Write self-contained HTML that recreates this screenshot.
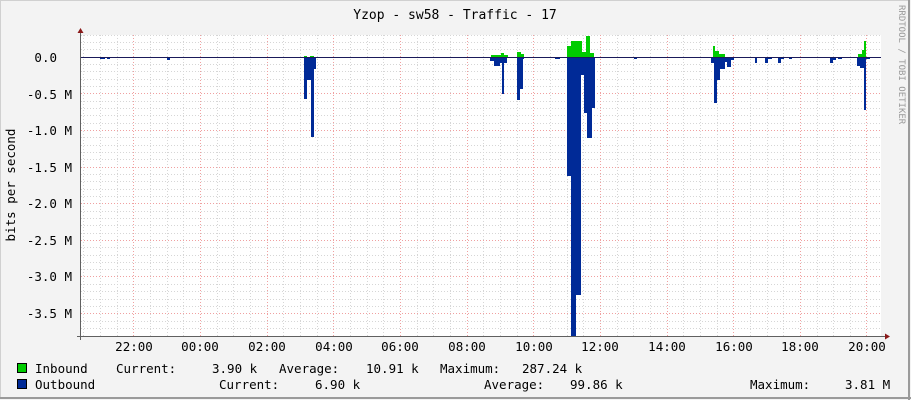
<!DOCTYPE html>
<html><head><meta charset="utf-8"><style>
html,body{margin:0;padding:0;background:#f3f3f3}
svg{display:block}
text{font-family:"DejaVu Sans Mono","Liberation Mono",monospace;fill:#000}
</style></head><body>
<svg width="911" height="400" viewBox="0 0 911 400" xmlns="http://www.w3.org/2000/svg">
<rect x="0" y="0" width="911" height="400" fill="#f3f3f3"/>
<rect x="0.5" y="0.5" width="908" height="397" fill="none" stroke="#d0d0d0"/>
<line x1="909" y1="0" x2="909" y2="400" stroke="#9a9a9a" stroke-width="2"/>
<line x1="0" y1="398" x2="911" y2="398" stroke="#9a9a9a" stroke-width="2"/>
<rect x="81" y="35" width="800" height="301" fill="#fff"/>
<g id="grid" stroke-width="1" stroke-dasharray="1,2" shape-rendering="crispEdges">
<g stroke="#d6d6d6">
<line x1="83.5" y1="35" x2="83.5" y2="336"/><line x1="100.5" y1="35" x2="100.5" y2="336"/><line x1="117.5" y1="35" x2="117.5" y2="336"/>
<line x1="150.5" y1="35" x2="150.5" y2="336"/><line x1="167.5" y1="35" x2="167.5" y2="336"/><line x1="183.5" y1="35" x2="183.5" y2="336"/>
<line x1="217.5" y1="35" x2="217.5" y2="336"/><line x1="233.5" y1="35" x2="233.5" y2="336"/><line x1="250.5" y1="35" x2="250.5" y2="336"/>
<line x1="283.5" y1="35" x2="283.5" y2="336"/><line x1="300.5" y1="35" x2="300.5" y2="336"/><line x1="317.5" y1="35" x2="317.5" y2="336"/>
<line x1="350.5" y1="35" x2="350.5" y2="336"/><line x1="367.5" y1="35" x2="367.5" y2="336"/><line x1="383.5" y1="35" x2="383.5" y2="336"/>
<line x1="417.5" y1="35" x2="417.5" y2="336"/><line x1="433.5" y1="35" x2="433.5" y2="336"/><line x1="450.5" y1="35" x2="450.5" y2="336"/>
<line x1="483.5" y1="35" x2="483.5" y2="336"/><line x1="500.5" y1="35" x2="500.5" y2="336"/><line x1="517.5" y1="35" x2="517.5" y2="336"/>
<line x1="550.5" y1="35" x2="550.5" y2="336"/><line x1="567.5" y1="35" x2="567.5" y2="336"/><line x1="583.5" y1="35" x2="583.5" y2="336"/>
<line x1="617.5" y1="35" x2="617.5" y2="336"/><line x1="633.5" y1="35" x2="633.5" y2="336"/><line x1="650.5" y1="35" x2="650.5" y2="336"/>
<line x1="683.5" y1="35" x2="683.5" y2="336"/><line x1="700.5" y1="35" x2="700.5" y2="336"/><line x1="717.5" y1="35" x2="717.5" y2="336"/>
<line x1="750.5" y1="35" x2="750.5" y2="336"/><line x1="767.5" y1="35" x2="767.5" y2="336"/><line x1="783.5" y1="35" x2="783.5" y2="336"/>
<line x1="817.5" y1="35" x2="817.5" y2="336"/><line x1="833.5" y1="35" x2="833.5" y2="336"/><line x1="850.5" y1="35" x2="850.5" y2="336"/>
<line x1="81" y1="35.5" x2="881" y2="35.5"/><line x1="81" y1="42.5" x2="881" y2="42.5"/><line x1="81" y1="49.5" x2="881" y2="49.5"/>
<line x1="81" y1="64.5" x2="881" y2="64.5"/><line x1="81" y1="71.5" x2="881" y2="71.5"/><line x1="81" y1="79.5" x2="881" y2="79.5"/><line x1="81" y1="86.5" x2="881" y2="86.5"/>
<line x1="81" y1="101.5" x2="881" y2="101.5"/><line x1="81" y1="108.5" x2="881" y2="108.5"/><line x1="81" y1="115.5" x2="881" y2="115.5"/><line x1="81" y1="123.5" x2="881" y2="123.5"/>
<line x1="81" y1="137.5" x2="881" y2="137.5"/><line x1="81" y1="145.5" x2="881" y2="145.5"/><line x1="81" y1="152.5" x2="881" y2="152.5"/><line x1="81" y1="159.5" x2="881" y2="159.5"/>
<line x1="81" y1="174.5" x2="881" y2="174.5"/><line x1="81" y1="181.5" x2="881" y2="181.5"/><line x1="81" y1="189.5" x2="881" y2="189.5"/><line x1="81" y1="196.5" x2="881" y2="196.5"/>
<line x1="81" y1="211.5" x2="881" y2="211.5"/><line x1="81" y1="218.5" x2="881" y2="218.5"/><line x1="81" y1="225.5" x2="881" y2="225.5"/><line x1="81" y1="233.5" x2="881" y2="233.5"/>
<line x1="81" y1="247.5" x2="881" y2="247.5"/><line x1="81" y1="255.5" x2="881" y2="255.5"/><line x1="81" y1="262.5" x2="881" y2="262.5"/><line x1="81" y1="269.5" x2="881" y2="269.5"/>
<line x1="81" y1="284.5" x2="881" y2="284.5"/><line x1="81" y1="291.5" x2="881" y2="291.5"/><line x1="81" y1="299.5" x2="881" y2="299.5"/><line x1="81" y1="306.5" x2="881" y2="306.5"/>
<line x1="81" y1="321.5" x2="881" y2="321.5"/><line x1="81" y1="328.5" x2="881" y2="328.5"/>
</g>
<g stroke="#f0a0a0">
<line x1="133.5" y1="35" x2="133.5" y2="336"/><line x1="200.5" y1="35" x2="200.5" y2="336"/><line x1="267.5" y1="35" x2="267.5" y2="336"/>
<line x1="333.5" y1="35" x2="333.5" y2="336"/><line x1="400.5" y1="35" x2="400.5" y2="336"/><line x1="467.5" y1="35" x2="467.5" y2="336"/>
<line x1="533.5" y1="35" x2="533.5" y2="336"/><line x1="600.5" y1="35" x2="600.5" y2="336"/><line x1="667.5" y1="35" x2="667.5" y2="336"/>
<line x1="733.5" y1="35" x2="733.5" y2="336"/><line x1="800.5" y1="35" x2="800.5" y2="336"/><line x1="866.5" y1="35" x2="866.5" y2="336"/>
<line x1="81" y1="93.5" x2="881" y2="93.5"/><line x1="81" y1="130.5" x2="881" y2="130.5"/><line x1="81" y1="167.5" x2="881" y2="167.5"/>
<line x1="81" y1="203.5" x2="881" y2="203.5"/><line x1="81" y1="240.5" x2="881" y2="240.5"/><line x1="81" y1="276.5" x2="881" y2="276.5"/><line x1="81" y1="313.5" x2="881" y2="313.5"/>
</g>
</g>
<!-- inbound (green) -->
<g fill="#00cc00" shape-rendering="crispEdges">
<rect x="304" y="56" width="3" height="1"/><rect x="310" y="56" width="4" height="1"/>
<rect x="491" y="55" width="10" height="2"/><rect x="501" y="53" width="3" height="4"/><rect x="504" y="55" width="4" height="2"/>
<rect x="517" y="52" width="4" height="5"/><rect x="521" y="54" width="3" height="3"/>
<rect x="567" y="46" width="4" height="11"/><rect x="571" y="41" width="11" height="16"/><rect x="582" y="52" width="4" height="5"/><rect x="586" y="36" width="4" height="21"/><rect x="590" y="53" width="4" height="4"/>
<rect x="713" y="46" width="2" height="11"/><rect x="715" y="51" width="4" height="6"/><rect x="719" y="54" width="6" height="3"/>
<rect x="858" y="54" width="4" height="3"/><rect x="862" y="50" width="2" height="7"/><rect x="864" y="41" width="2" height="16"/>
</g>
<!-- outbound (blue) -->
<g fill="#002a97" shape-rendering="crispEdges">
<rect x="100" y="57" width="5" height="2"/><rect x="107" y="57" width="3" height="2"/><rect x="167" y="57" width="3" height="3"/>
<rect x="304" y="57" width="3" height="42"/><rect x="307" y="57" width="4" height="23"/><rect x="311" y="57" width="3" height="80"/><rect x="314" y="57" width="2" height="12"/>
<rect x="490" y="57" width="4" height="4"/><rect x="494" y="57" width="6" height="9"/><rect x="500" y="57" width="2" height="6"/><rect x="502" y="57" width="2" height="37"/><rect x="504" y="57" width="3" height="6"/>
<rect x="517" y="57" width="3" height="43"/><rect x="520" y="57" width="3" height="32"/><rect x="523" y="57" width="1" height="2"/>
<rect x="530" y="57" width="3" height="1"/><rect x="542" y="57" width="3" height="1"/><rect x="555" y="57" width="5" height="2"/>
<rect x="567" y="57" width="4" height="119"/><rect x="571" y="57" width="5" height="279"/><rect x="576" y="57" width="5" height="238"/>
<rect x="581" y="57" width="3" height="18"/><rect x="584" y="57" width="3" height="56"/><rect x="587" y="57" width="5" height="81"/><rect x="592" y="57" width="3" height="51"/>
<rect x="634" y="57" width="3" height="2"/>
<rect x="711" y="57" width="3" height="6"/><rect x="714" y="57" width="3" height="46"/><rect x="717" y="57" width="3" height="23"/><rect x="720" y="57" width="5" height="12"/><rect x="725" y="57" width="2" height="5"/><rect x="727" y="57" width="4" height="10"/><rect x="731" y="57" width="3" height="3"/>
<rect x="755" y="57" width="2" height="6"/><rect x="765" y="57" width="3" height="6"/><rect x="768" y="57" width="4" height="2"/><rect x="778" y="57" width="3" height="6"/><rect x="781" y="57" width="3" height="2"/><rect x="789" y="57" width="3" height="2"/>
<rect x="830" y="57" width="3" height="6"/><rect x="833" y="57" width="3" height="3"/><rect x="838" y="57" width="4" height="2"/>
<rect x="857" y="57" width="3" height="9"/><rect x="860" y="57" width="4" height="11"/><rect x="864" y="57" width="2" height="53"/><rect x="866" y="57" width="4" height="2"/>
</g>
<line x1="81" y1="57.5" x2="881" y2="57.5" stroke="#1a1a5a" stroke-width="1"/>
<!-- axes -->
<line x1="80.5" y1="33" x2="80.5" y2="340" stroke="#606060"/>
<polygon points="77.5,33 83.5,33 80.5,28" fill="#8b1a1a"/>
<line x1="77" y1="336.5" x2="886" y2="336.5" stroke="#606060"/>
<polygon points="885,333.5 885,339.5 890,336.5" fill="#8b1a1a"/>
<text x="455" y="19" font-size="13" text-anchor="middle">Yzop - sw58 - Traffic - 17</text>
<g font-size="12.5" text-anchor="end">
<text x="57" y="62">0.0</text>
<text x="72" y="99">-0.5 M</text>
<text x="72" y="135">-1.0 M</text>
<text x="72" y="172">-1.5 M</text>
<text x="72" y="208">-2.0 M</text>
<text x="72" y="245">-2.5 M</text>
<text x="72" y="281">-3.0 M</text>
<text x="72" y="318">-3.5 M</text>
</g>
<g font-size="12.5" text-anchor="middle">
<text x="134" y="351">22:00</text><text x="200" y="351">00:00</text><text x="267" y="351">02:00</text><text x="334" y="351">04:00</text>
<text x="400" y="351">06:00</text><text x="467" y="351">08:00</text><text x="534" y="351">10:00</text><text x="600" y="351">12:00</text>
<text x="667" y="351">14:00</text><text x="734" y="351">16:00</text><text x="800" y="351">18:00</text><text x="867" y="351">20:00</text>
</g>
<text transform="translate(15,185) rotate(-90)" font-size="12.5" text-anchor="middle">bits per second</text>
<text transform="translate(899,5) rotate(90)" font-size="9" fill="#999" style="fill:#999">RRDTOOL / TOBI OETIKER</text>
<rect x="17.5" y="363.5" width="9" height="9" fill="#00cc00" stroke="#000"/>
<rect x="17.5" y="379.5" width="9" height="9" fill="#002a97" stroke="#000"/>
<g font-size="12.5">
<text x="35" y="373">Inbound</text><text x="116" y="373">Current:</text><text x="212" y="373">3.90 k</text>
<text x="279" y="373">Average:</text><text x="366" y="373">10.91 k</text><text x="440" y="373">Maximum:</text><text x="522" y="373">287.24 k</text>
<text x="35" y="389">Outbound</text><text x="219" y="389">Current:</text><text x="315" y="389">6.90 k</text>
<text x="484" y="389">Average:</text><text x="570" y="389">99.86 k</text><text x="750" y="389">Maximum:</text><text x="845" y="389">3.81 M</text>
</g>
</svg>
</body></html>
